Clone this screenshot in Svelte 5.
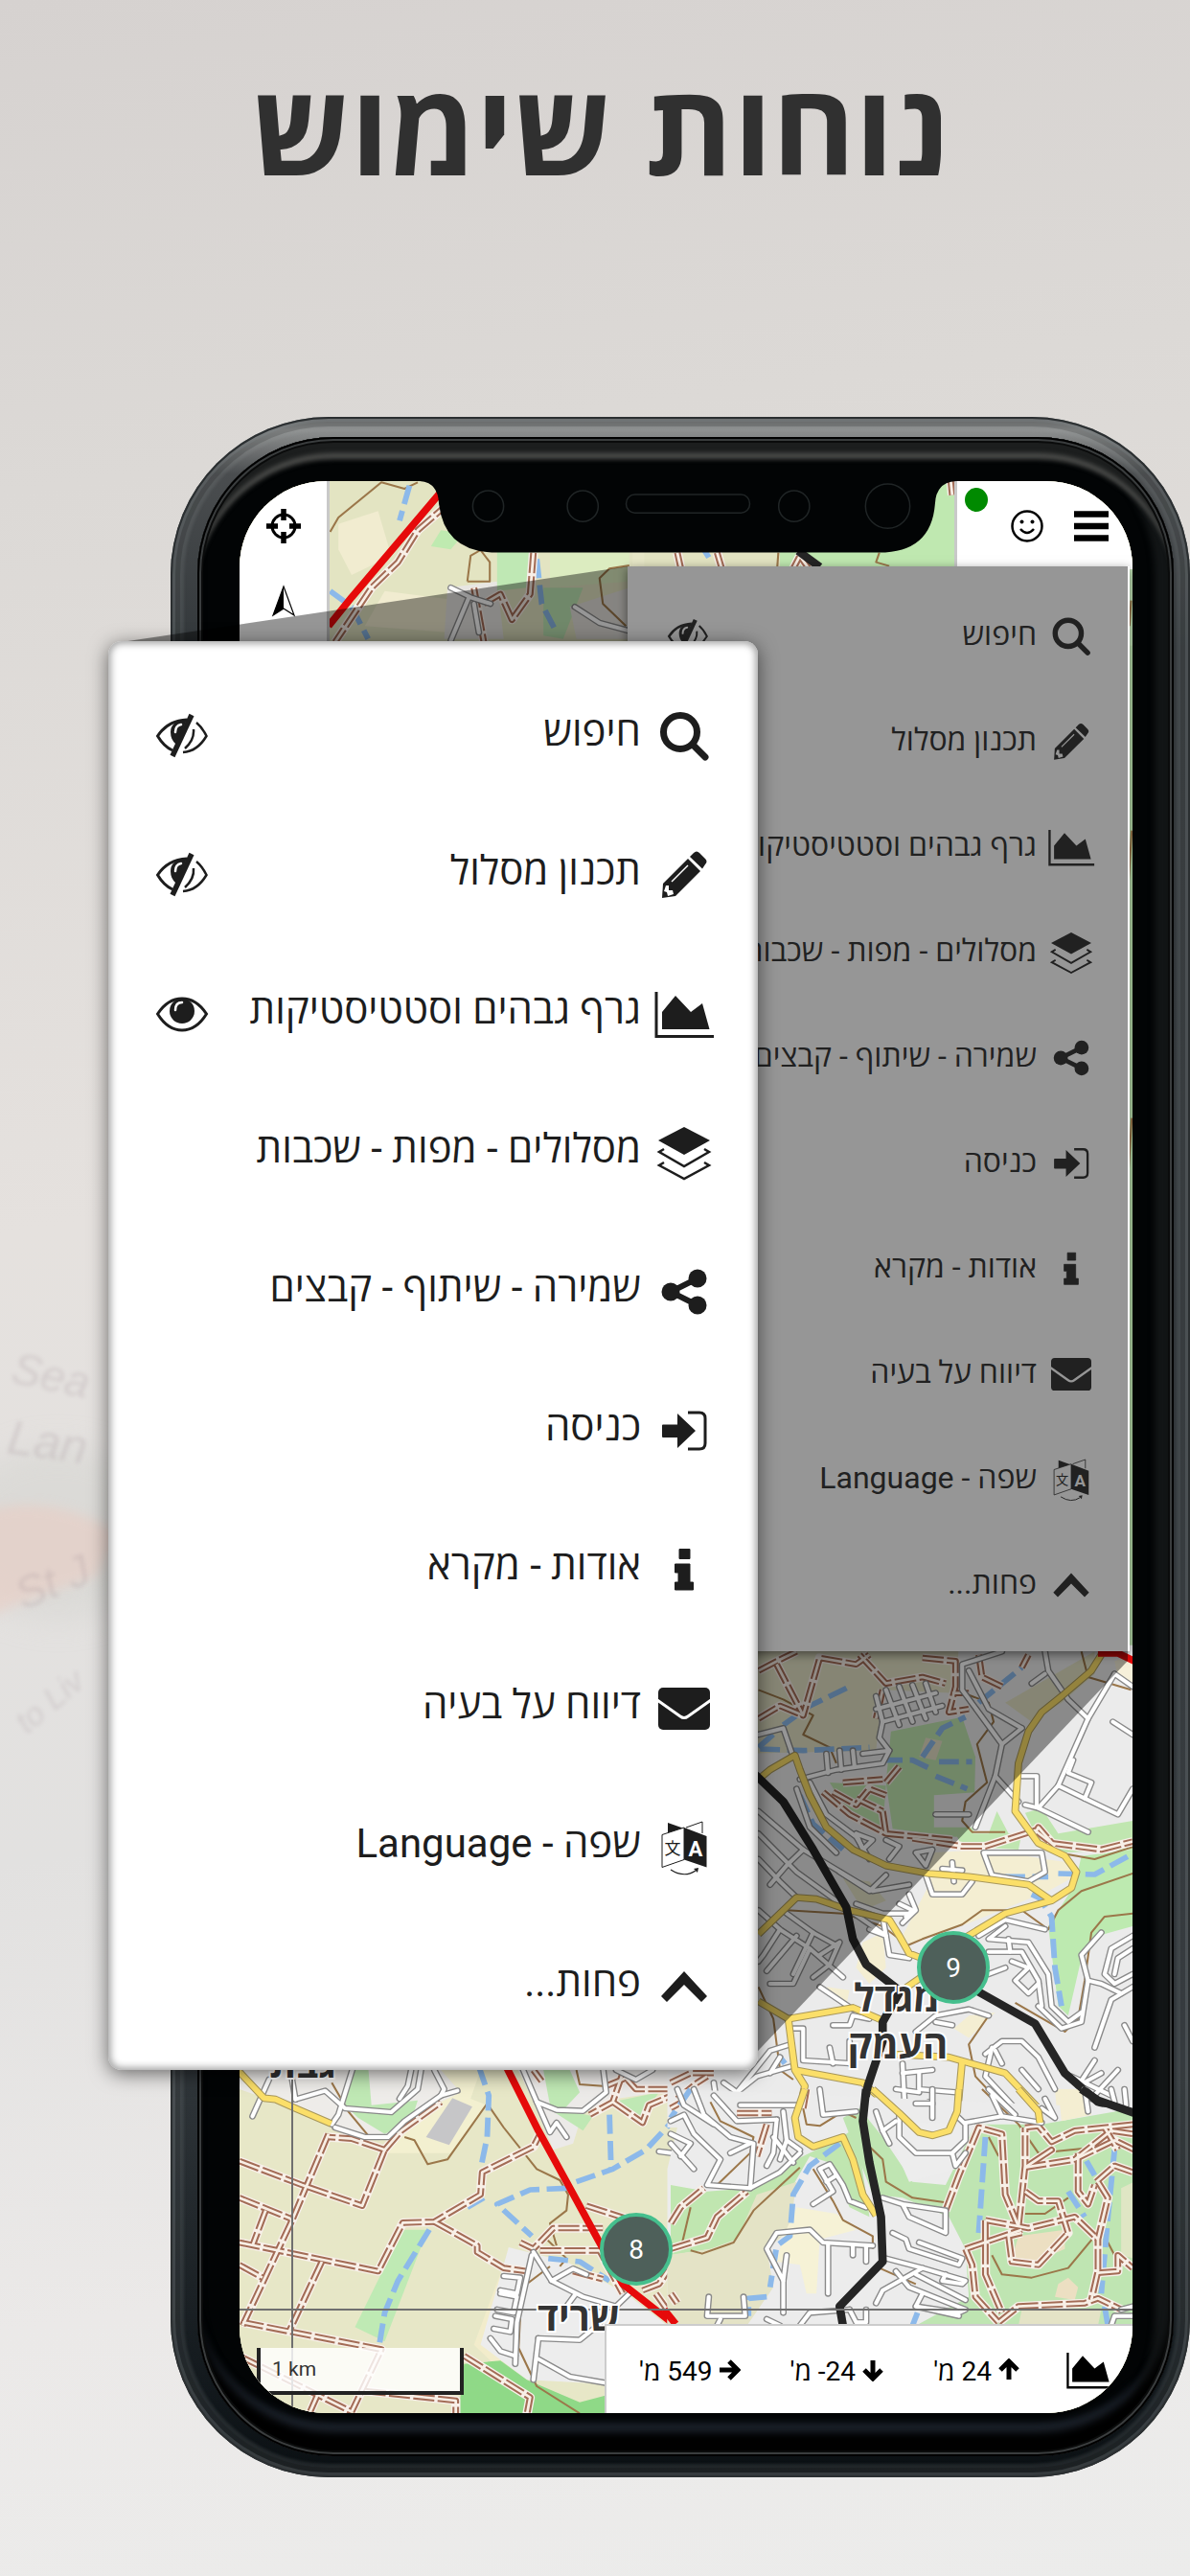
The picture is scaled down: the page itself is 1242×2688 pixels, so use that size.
<script>
  const items = [
    { icon: 'search', label: 'חיפוש', eye: 'hidden' },
    { icon: 'pencil', label: 'תכנון מסלול', eye: 'hidden' },
    { icon: 'chart', label: 'גרף גבהים וסטטיסטיקות', eye: 'shown' },
    { icon: 'layers', label: 'מסלולים - מפות - שכבות' },
    { icon: 'share', label: 'שמירה - שיתוף - קבצים' },
    { icon: 'login', label: 'כניסה' },
    { icon: 'info', label: 'אודות - מקרא' },
    { icon: 'mail', label: 'דיווח על בעיה' },
    { icon: 'lang', label: 'שפה - Language' },
    { icon: 'up', label: 'פחות...' }
  ];

  const stats = [
    { dir: 'up', text: "24 מ'" },
    { dir: 'down', text: "24- מ'" },
    { dir: 'right', text: "549 מ'" }
  ];
  const arrows = {
    up: 'M12 22V4M3 12L12 3L21 12',
    down: 'M12 2V20M3 12L12 21L21 12',
    right: 'M2 12H20M12 3L21 12L12 21'
  };

  // Map tiles: each one has its own local grid, placed on the sheet by `at`.
  const tiles = [
    {
      at: 'translate(160 400) scale(.345 .3333)',
      areas: [
        ['#e3e4c2', '520,300 1450,300 1450,830 520,830'],
        ['#f1ecd0', '560,440 680,400 720,540 600,600 560,520'],
        ['#f1ecd0', '700,650 1000,690 900,780 640,760'],
        ['#e8e6e2', '890,640 1040,620 1060,800 880,800'],
        ['#bfeab0', '840,510 870,460 940,470 900,520'],
        ['#dcecc0', '1200,527 1440,527 1440,620 1200,640'],
        ['#bfe8b4', '1040,527 1150,527 1130,640 1040,650'],
        ['#bfe8b4', '1180,640 1300,640 1240,800 1180,790'],
        ['#e4e1dc', '1260,700 1440,640 1440,800 1280,800']
      ],
      contour: ['535,465 560,420 690,310 760,330 800,310', '950,620 960,540 990,522 1018,560 1018,620 950,620', '1440,570 1380,580 1350,610 1360,690 1430,760'],
      river: ['775,320 745,430', '1160,550 1175,690 1220,780', '535,650 600,700 650,800'],
      track: ['900,370 800,460 740,560 660,640 550,810', '1150,530 1140,660 1085,740 1050,660 1000,690', '970,640 1000,810'],
      street: ['900,640 960,670 1020,690', '955,670 900,805', '970,690 985,780', '1275,700 1350,750 1440,775'],
      yellow: [],
      black: [],
      red: ['530,760 600,670 870,340']
    },
    {
      at: 'translate(700 400) scale(.3457 .3333)',
      areas: [
        ['#e3e4c2', '-80,500 400,500 400,600 -80,600'],
        ['#bfe8b0', '330,500 700,500 780,300 860,300 860,600 330,600'],
        ['#bfe0b4', '1370,570 1400,570 1400,820 1370,820'],
        ['#b4d8a8', '1370,820 1400,820 1400,4000 1370,4000']
      ],
      contour: ['320,600 325,530', '630,530 620,560 660,572', '1390,680 1385,760', '1392,1400 1380,1600', '1392,2300 1380,2500'],
      river: ['100,520 115,545'],
      track: ['20,530 35,600', '140,530 160,600', '360,600 390,540 430,600', '845,300 850,350'],
      street: [],
      yellow: [],
      black: ['385,525 450,575'],
      red: []
    },
    {
      at: 'translate(160 2130) scale(.345 .3333)',
      areas: [
        ['#e7e7c7', '240,40 1600,40 1600,1200 240,1200'],
        ['#eeece9', '240,40 900,40 930,160 740,290 640,305 540,262 400,200 260,150'],
        ['#f3f0d0', '870,90 990,90 960,180 1010,200 900,350 700,350 830,210 930,160'],
        ['#bfe8b4', '600,80 650,80 660,200 800,185 780,250 700,290 620,240 580,200'],
        ['#c6c6c8', '825,300 905,178 965,205 895,325'],
        ['#eceae8', '1090,60 1600,60 1600,150 1400,180 1300,220 1270,320 1210,340 1150,190'],
        ['#bfe8b4', '1180,90 1260,90 1290,160 1240,215 1200,200'],
        ['#bfe8b4', '1390,190 1530,160 1470,250'],
        ['#bfe8b4', '1180,200 1330,235 1300,280'],
        ['#bfeab4', '755,590 830,590 700,940 610,895'],
        ['#f2eccb', '1060,700 1100,700 1050,1030 970,950'],
        ['#ededed', '1075,645 1250,690 1430,790 1568,900 1500,1080 1130,1060 990,950'],
        ['#8fd987', '940,1010 1050,1000 1130,1060 1290,1130 1400,1100 1400,1200 920,1200']
      ],
      contour: [
        '540,130 590,220 650,295',
        '760,300 790,310 830,385 890,370 1010,195 1060,270 1160,400 1230,435 1255,480 1250,530 1200,570 1220,640',
        '1280,90 1290,135 1360,140',
        '1200,705 1130,760 1110,860 1105,960 1160,1080 1290,1165',
        '1180,610 1250,680 1230,705'
      ],
      river: [
        '985,80 1015,170 1010,300 990,400',
        '1250,460 1140,465 1040,510 1145,610',
        '1280,440 1390,400 1490,340 1580,240',
        '1380,230 1385,400',
        '835,590 740,750 700,850 683,955',
        '1195,680 1290,690 1380,750',
        '1000,490 950,520'
      ],
      track: [
        '530,290 420,560 270,890',
        '260,375 450,450 632,515 700,340 600,305 530,300',
        '700,340 750,280 870,190',
        '260,490 415,555',
        '340,530 300,640',
        '260,630 680,720 755,568 850,565 990,480 995,410 1150,330 1170,290',
        '850,565 980,640 980,660 1060,710 1130,720',
        '260,700 330,740',
        '510,690 410,910',
        '270,880 690,965 600,1160',
        '260,985 600,1160',
        '500,1100 470,1170',
        '640,1095 915,1125 915,1170',
        '940,985 1140,1115 1130,1170',
        '1310,515 1430,555',
        '1110,630 1150,650 1210,585 1360,585',
        '1170,655 1350,655 1420,790',
        '1270,720 1360,745',
        '1150,90 1175,125',
        '1420,100 1390,190 1320,230',
        '1390,190 1480,255 1500,200 1568,170',
        '1370,140 1430,115 1460,150 1568,150',
        '1480,780 1530,760 1568,700',
        '1520,790 1568,860'
      ],
      street: [
        '605,80 560,230 540,260',
        '350,120 300,235',
        '430,182 520,155 580,210 720,222 800,150 810,90',
        '550,270 640,300 710,300 760,250 870,170 920,155',
        '420,120 430,182',
        '780,90 770,140 745,180',
        '850,90 880,150 870,170',
        '1115,80 1160,190 1220,215 1300,218 1370,160 1360,80',
        '1160,190 1200,285 1220,255 1250,300',
        '1400,90 1460,120 1510,90',
        '1568,350 1530,345',
        '1145,670 1100,880 1095,1010',
        '1060,735 1110,740 1100,790 1050,780',
        '1050,790 1100,800 1090,850 1040,840',
        '1035,860 1085,870 1080,910 1030,900',
        '1020,930 1050,970 1095,985',
        '1150,660 1205,750 1270,712 1310,730',
        '1205,750 1300,800 1400,830 1440,790',
        '1250,830 1275,795',
        '1165,930 1290,935 1350,885',
        '1165,930 1150,1060',
        '1165,995 1260,1050 1370,1070'
      ],
      yellow: ['255,90 335,178 370,182 430,210 538,258'],
      black: [],
      red: ['1068,80 1165,280 1250,440 1350,630 1420,760 1580,890']
    },
    {
      at: 'translate(700 1700) scale(.3457 .3333)',
      areas: [
        ['#ebebeb', '200,50 1400,50 1400,1560 -10,1560 -10,1350 200,1350'],
        ['#e4e3c6', '200,50 870,50 860,200 640,190 620,380 200,390'],
        ['#e4e3c6', '1010,230 1280,70 1280,140 1180,230 1090,290'],
        ['#c0e6b0', '665,320 880,275 920,400 915,640 860,650 670,625 650,480'],
        ['#e6e1c8', '770,340 820,350 800,410 750,400'],
        ['#ebebeb', '795,520 930,510 925,620 795,620'],
        ['#c0e6b0', '860,640 960,640 985,570 1020,640 1060,640 1050,690 880,680'],
        ['#c0e6b0', '1070,575 1120,560 1170,640 1395,600 1395,690 1180,700 1110,660'],
        ['#f4eed2', '780,700 960,690 1130,720 1200,730 1210,780 1140,820 900,920 720,985 700,960 780,800'],
        ['#bdeab0', '1220,800 1240,710 1395,690 1395,930 1290,960 1240,1030 1200,1210 1170,1180 1140,930'],
        ['#f4eed2', '560,1060 580,980 640,950 650,1060 600,1110'],
        ['#f4eed2', '855,1250 900,1210 980,1200 900,1280'],
        ['#f4eed2', '470,1120 540,1130 530,1180'],
        ['#c0e6b0', '480,480 650,490 640,620 540,580'],
        ['#e4e3c6', '520,780 600,790 650,850 580,880'],
        ['#f4eed2', '1160,1440 1240,1440 1250,1500 1170,1560'],
        ['#f6f0da', '1340,100 1400,80 1400,170 1350,150']
      ],
      contour: [
        '265,190 340,220 430,270 400,330 480,370 500,420',
        '860,190 960,230 975,290 925,360 955,480 890,540 880,600 910,635 1010,635',
        '1240,70 1260,150 1390,190',
        '1170,700 1280,720 1400,680',
        '1395,765 1240,820 1170,880 1140,940 1060,880 940,880 880,925 760,970 715,990',
        '350,880 520,890 640,930 690,970',
        '265,1120 310,1220 330,1380 370,1410',
        '960,1210 900,1300 920,1400 1010,1500',
        '1395,890 1310,900 1270,950 1250,1100 1230,1220 1190,1260 1040,1170'
      ],
      river: [
        '270,375 400,380 600,370', '340,300 420,240 550,175', '265,370 320,320', '640,410 730,410 790,440', '760,400 820,310 890,275',
        '810,415 910,415', '800,460 895,500', '390,520 430,610 520,690', '1100,820 1150,900 1160,1060 1180,1180', '1170,765 1280,768 1400,700',
        '930,230 1060,120', '1090,830 1130,850', '1010,775 1140,775', '330,1340 345,1360'
      ],
      track: [
        '265,130 340,90 380,70', '320,110 400,270 450,90 560,110 600,80', '265,280 330,240 400,270', '570,80 650,170 760,150 830,170',
        '760,90 860,100 860,180 840,260 900,250', '900,200 850,200', '640,190 620,280', '690,430 650,480', '460,510 540,580 650,640 850,660',
        '490,510 560,550 600,500 650,520', '560,530 640,570', '520,480 640,470', '640,570 650,640',
        '730,655 880,680 950,680 1100,630 1150,670 1300,690 1395,665', '1100,640 1110,620 1160,680', '930,80 940,150 1000,180', '1080,80 1060,120',
        '0,1420 60,1390 130,1390', '20,1470 80,1420 110,1400', '0,1500 70,1460'
      ],
      street: [
        '620,210 640,290 630,340 660,380 580,390', '650,190 690,300', '690,180 730,290', '730,175 770,280', '770,170 800,260', '620,250 800,200', '640,290 820,240',
        '265,330 340,310 370,400', '390,470 500,440 640,420 660,380', '470,390 475,450', '510,380 515,440', '550,380 555,430',
        '1000,70 880,110 880,190 1000,360 1060,310', '900,130 960,250 1060,310', '1130,70 1140,130 1200,220 1260,280',
        '1090,170 1130,140', '1340,140 1260,280 1170,490 1110,560 1070,550', '1110,560 1260,635', '1060,460 1105,460 1105,550', '1215,410 1200,450 1270,480 1250,530 1170,490',
        '1250,530 1350,580 1395,500', '1335,290 1395,330', '1340,140 1395,180', '1000,360 980,460 1050,540', '980,460 920,620', '800,580 900,580',
        '265,570 400,690 560,790 610,820 720,800', '265,640 380,760 540,880', '420,480 470,580 560,650 600,720', '380,500 420,620 500,700',
        '560,640 610,660 580,690 560,640', '650,660 690,680 660,720', '740,700 790,690 770,740 740,700', '510,760 600,820 650,770',
        '265,720 330,790 380,840', '300,800 350,740 400,690', '265,880 330,940 420,1000 520,1090', '350,890 430,950 500,990', '330,940 280,1020 265,1040', '420,1000 370,1110 300,1110',
        '380,960 290,1070', '430,950 370,1080', '540,880 650,960 640,900', '560,860 640,890 720,890', '450,1020 510,980 480,1050 430,1090',
        '945,700 1120,700 1130,760 1080,790 970,770 945,700', '770,770 790,830 880,830 910,790', '850,730 855,790', '820,750 880,755', '720,830 740,880 700,920', '690,860 730,880 710,900',
        '600,940 650,960 660,1020 720,1030', '930,960 1010,910 1130,940', '1010,930 960,970 1080,980 1140,1080 1150,1180 1200,1230 1240,1200', '960,1010 1060,1010 1110,1100 1120,1180',
        '1020,970 1025,1010', '1030,1040 1080,1060 1040,1100 1080,1140 1110,1110', '960,1080 1010,1060', '1395,960 1330,1000 1310,1080 1340,1110 1395,1080',
        '1395,1000 1350,1030 1340,1080', '1300,950 1240,1020 1260,1100 1240,1230 1180,1250 1110,1180', '1395,1120 1330,1160 1280,1310', '1370,1240 1395,1290', '1260,1100 1300,1110 1360,1140',
        '740,1260 800,1210 900,1190 960,1210', '800,1230 850,1240', '950,1330 1000,1290 1060,1290 1110,1340 1160,1440', '1000,1360 980,1320', '970,1310 950,1400 1040,1500',
        '1280,1350 1230,1430 1300,1390', '1210,1400 1330,1460', '1350,1380 1270,1470', '1110,1440 1060,1380',
        '450,1120 550,1190', '490,1240 540,1240 550,1210 600,1220', '370,1250 400,1250 400,1350 550,1360', '480,1310 490,1360', '540,1290 540,1360',
        '700,1360 710,1560', '700,1390 790,1380', '750,1390 750,1440 860,1450', '680,1440 750,1450', '780,1480 780,1560',
        '360,1300 300,1320 200,1450 160,1420', '330,1340 300,1390', '360,1370 260,1400 200,1450', '210,1495 310,1495', '130,1420 150,1560'
      ],
      yellow: [
        '265,470 300,440 375,395 390,440 420,520 470,620 550,690 650,740 780,765 900,775 1080,800 1150,850',
        '1300,80 1270,130 1180,210 1120,260 1080,320 1050,420 1040,570 1110,670 1190,710 1225,760 1210,810 1150,850 1010,890 890,965',
        '265,955 380,840 440,845 540,880 660,910 690,960 720,1015 770,1035',
        '265,1165 355,1220 550,1185 640,1225',
        '355,1220 375,1380 405,1430 390,1500',
        '375,1380 580,1420 690,1520',
        '660,1330 840,1340 1010,1390 1110,1500',
        '880,1350 865,1520',
        '700,1130 770,1080'
      ],
      black: [
        '255,455 340,540 430,690 530,870 550,970 590,1050 690,1130',
        '700,1120 640,1230 640,1290 595,1430 580,1510',
        '920,1130 1100,1235 1190,1390 1290,1480 1400,1515'
      ],
      red: ['1290,75 1350,75 1400,100']
    },
    {
      at: 'translate(700 2180) scale(.3457 .3333)',
      areas: [
        ['#ececec', '30,0 1400,60 1400,760 -10,760 -10,250 20,120'],
        ['#c0e6b0', '0,300 110,320 250,310 380,220 500,160 560,120 600,400 540,370 480,230 420,210 370,300 270,340 200,470 120,500 0,520'],
        ['#e4e3c6', '-10,520 120,500 200,470 260,330 380,290 360,440 290,500 310,620 230,740 -10,740'],
        ['#f6f2d6', '380,370 500,390 560,440 450,470 440,640 410,640 390,550 320,540 340,460'],
        ['#bfe5b2', '520,90 570,60 640,150 730,290 830,300 920,110 1120,110 1400,60 1400,740 740,740 900,650 890,500 840,400 700,340 610,330'],
        ['#ededed', '640,100 900,110 860,250 720,290'],
        ['#ecdfc2', '1050,460 1190,440 1190,500 1100,540 1030,530'],
        ['#ecdfc2', '1170,610 1200,590 1230,620 1220,660 1160,650'],
        ['#e4e3c6', '1060,690 1300,690 1290,740 1050,740'],
        ['#dfe6c4', '1360,310 1400,290 1400,530 1360,520'],
        ['#f4eed2', '1170,0 1260,20 1270,80 1180,100']
      ],
      contour: [
        '120,40 150,100 250,150 240,200 140,300', '400,60 410,110 450,115 520,70 560,90', '600,180 640,220 650,290 730,340 830,355',
        '390,245 250,380 190,480 95,515 60,505', '430,250 490,350 520,410 610,460 610,500', '60,370 35,480', '940,0 1050,110 1110,200 1300,180',
        '960,150 990,210', '970,520 1000,580 1090,590 1200,560 1280,460', '1070,390 1130,390 1200,340', '1310,460 1340,520', '630,560 740,610'
      ],
      river: ['510,170 420,240 370,330 360,460 320,490 300,620', '290,650 235,655 235,710', '950,150 930,450', '1340,190 1320,400 1300,640', '1255,225 1280,270', '1200,320 1250,400', '745,700 730,740', '1310,680 1320,740', '60,0 0,90'],
      track: [
        '200,75 305,75', '290,110 260,210', '410,0 400,60', '0,420 30,370 100,310', '0,500 110,465 140,400 230,320', '0,640 20,670',
        '830,380 870,270 930,120 1000,140 1010,330 1050,430', '1050,430 1070,240 1070,120', '1070,245 1220,220 1340,160 1400,190', '1070,245 1150,190 1070,245',
        '1070,120 1110,115 1150,165 1220,130 1400,110', '1310,120 1350,190', '1230,200 1230,320 1260,360 1280,300', '1285,290 1340,240 1395,260', '1290,290 1320,340 1290,470 1290,570 1270,660',
        '1070,320 1110,350 1170,350 1200,450 1110,550 1030,540 1020,460 1060,450', '950,410 1080,435 1220,400 1290,470', '950,410 950,580 1000,700', '890,500 1060,440', '890,500 910,550 920,650 990,730',
        '990,730 1050,680 1250,670 1290,655 1360,690', '1290,575 1350,570 1350,520 1395,560', '1220,220 1330,130 1395,140'
      ],
      street: [
        '70,0 100,80 180,150 250,170 240,310', '20,0 40,50 130,110', '130,20 200,100 320,95', '210,50 320,50 380,50', '0,100 40,80 70,140 150,220 110,300 240,310 330,260 390,200',
        '0,170 70,250', '30,210 60,170 0,140', '180,200 240,170', '320,95 310,200 290,240', '340,70 350,160 390,190', '310,150 370,230', '350,160 330,220',
        '430,360 490,320 450,250 480,235 520,300 540,350 590,370', '470,290 500,270', '450,0 460,80 560,70', '620,70 640,130 680,100', '640,130 660,170',
        '690,80 690,150 740,200 850,200 890,160 890,110 860,80', '850,200 860,240 890,200', '740,45 790,45', '790,0 790,90', '890,105 1000,85 1120,105', '1000,85 970,20', '1040,80 960,0', '1120,60 1160,90 1130,30',
        '640,340 700,360 720,400 830,450 830,380 700,360', '350,520 340,600 290,500 320,450 420,440 460,480 610,490', '475,485 475,640', '550,490 550,520', '590,490 590,540',
        '340,600 340,700', '115,650 110,710 225,710 220,650', '150,720 140,740', '290,720 330,740', '390,740 420,700 540,690', '540,690 560,730 590,730 590,690',
        '670,450 710,470 720,500 870,550 880,530 750,480', '650,530 760,560 890,600 880,610 820,600 830,580', '680,570 720,620 890,690 870,700 740,680', '620,670 640,630 760,560', '740,580 890,660', '760,640 740,680 870,710',
        '1330,740 1340,710 1395,710', '1360,690 1395,680', '1250,0 1260,70', '1330,0 1340,40', '1370,0 1375,50'
      ],
      yellow: ['405,0 375,90 385,150 430,180 520,150 550,220 580,330 620,395', '610,0 690,75 750,135 790,145 840,130 865,70 870,0', '1050,0 1110,70 1115,105'],
      black: ['590,0 580,100 600,230 635,400 640,540 510,680 520,740', '1240,0 1290,35 1400,75'],
      red: ['-20,690 15,735']
    }
  ];
</script>

{#snippet icon(name)}
  <svg class="icon" viewBox="0 0 54 54" aria-hidden="true">
    {#if name === 'search'}
      <circle cx="23" cy="23" r="17.5" fill="none" stroke="currentColor" stroke-width="7" />
      <path d="M36 36L49 49" stroke="currentColor" stroke-width="7" stroke-linecap="round" />
    {:else if name === 'pencil'}
      <path d="M33 8l4-4q3-3 6 0l6 6q3 3 0 6l-3 4.500z" fill="currentColor" />
      <path d="M31 10L44 23L18 49L4 51L5 36Z" fill="currentColor" />
      <path d="M14 34L31 17" stroke="#fff" stroke-width="1.500" />
      <path d="M8 38l3 0v5h4l1 4-6 2-1-4-3-1z" fill="#fff" />
    {:else if name === 'chart'}
      <path d="M-2 4V50.500H58" fill="none" stroke="currentColor" stroke-width="3" />
      <path d="M4 43V25L18 8L34 25L46 16L53.500 43Z" fill="currentColor" />
    {:else if name === 'layers'}
      <path d="M0 14L27 0L54 14L27 29Z" fill="currentColor" />
      <path d="M6 23L1 26L27 41L53 26L48 23M6 37L1 40L27 54L53 40L48 37" fill="none" stroke="currentColor" stroke-width="2.500" />
    {:else if name === 'share'}
      <path d="M41 13L13 27L41 41" fill="none" stroke="currentColor" stroke-width="6" />
      <circle cx="13" cy="27" r="9.500" fill="currentColor" />
      <circle cx="41" cy="13" r="9.500" fill="currentColor" />
      <circle cx="41" cy="41" r="9.500" fill="currentColor" />
    {:else if name === 'login'}
      <path d="M5 20.500H20V9L39 27L20 45V34H5Q4 34 4 33V21.500Q4 20.500 5 20.500Z" fill="currentColor" />
      <path d="M31 8H43Q49 8 49 14V40Q49 46 43 46H31" fill="none" stroke="currentColor" stroke-width="3" />
    {:else if name === 'info'}
      <path d="M22 5.500H33V15.500H22ZM17.500 21H33V40H36.500V48H17.500V40H21V30H17.500Z" fill="currentColor" stroke="currentColor" stroke-width="1" stroke-linejoin="round" />
    {:else if name === 'mail'}
      <rect x="0" y="5" width="54" height="44" rx="5" fill="currentColor" />
      <path d="M-1 18L23 35Q27 38 31 35L55 18" fill="none" stroke="#fff" stroke-width="3" />
    {:else if name === 'lang'}
      <path d="M10 1L27 7L10 12Z" fill="currentColor" />
      <path d="M29 6L46 0V12" fill="none" stroke="currentColor" stroke-width="1" />
      <path d="M4 13.500L27 6V39.500L4 47.500Z" fill="#fff" stroke="currentColor" stroke-width="1" />
      <path d="M27 6L50.500 15V47.500L27 39.500Z" fill="currentColor" />
      <text x="39" y="36" text-anchor="middle" font-size="22" font-weight="700" fill="#fff">A</text>
      <text x="15" y="34" text-anchor="middle" font-size="17" fill="currentColor">文</text>
      <path d="M13 50Q27 59 39 51" fill="none" stroke="currentColor" stroke-width="1.200" />
      <path d="M37 49L42 48L41 53Z" fill="currentColor" />
    {:else if name === 'up'}
      <path d="M27 11L51 37L45 43L27 25L9 43L3 37Z" fill="currentColor" />
    {:else if name === 'shown'}
      <path d="M1.500 27Q12 11 27 11Q42 11 52.500 27Q42 44 27 44Q12 44 1.500 27Z" fill="none" stroke="currentColor" stroke-width="3" />
      <circle cx="27" cy="24" r="13" fill="currentColor" />
      <path d="M20 23Q20 15 27 15" fill="none" stroke="#fff" stroke-width="2.500" stroke-linecap="round" />
    {:else if name === 'hidden'}
      <path d="M17 42Q8 38 1.500 27Q12 11 32 10" fill="none" stroke="currentColor" stroke-width="3" />
      <path d="M32 10Q15 11 15 23Q15 31 21 36Z" fill="currentColor" />
      <path d="M20 23Q20 16 26 15" fill="none" stroke="#fff" stroke-width="2.500" stroke-linecap="round" />
      <path d="M37 5L17 48" stroke="currentColor" stroke-width="5.500" />
      <path d="M42 13Q48 18 52.500 27Q43 43 28 44M39 20Q40 31 30 40" fill="none" stroke="currentColor" stroke-width="2.500" />
    {/if}
  </svg>
{/snippet}

{#snippet menu()}
  {#each items as item}
    <li>
      <button class="entry">{@render icon(item.icon)}<span>{item.label}</span></button>
      {#if item.eye}
        <button class="eye" aria-label="הצגה או הסתרה">{@render icon(item.eye)}</button>
      {/if}
    </li>
  {/each}
{/snippet}

<main class="page" dir="rtl">
  <svg class="backdrop" viewBox="0 0 1242 2688" preserveAspectRatio="none" aria-hidden="true">
    <defs>
      <filter id="soft"><feGaussianBlur stdDeviation="2" /></filter>
      <filter id="haze" x="-50%" y="-50%" width="200%" height="200%"><feGaussianBlur stdDeviation="16" /></filter>
      <filter id="edge" x="-20%" y="-20%" width="140%" height="140%"><feGaussianBlur stdDeviation="6" /></filter>
    </defs>
    <ellipse cx="60" cy="1600" rx="110" ry="90" fill="#d6d6d2" opacity=".6" filter="url(#haze)" />
    <path d="M-20 1578Q50 1555 125 1600L100 1645Q40 1665 -20 1690Z" fill="#eccbc0" opacity=".5" filter="url(#edge)" />
    <g class="print" filter="url(#soft)" direction="ltr">
      <text x="10" y="1442" transform="rotate(12 10 1442)" font-size="46">Sea</text>
      <text x="6" y="1516" transform="rotate(8 6 1516)" font-size="50">Lan</text>
      <text x="24" y="1680" transform="rotate(-22 24 1680)" font-size="46">St J</text>
      <text x="28" y="1810" transform="rotate(-40 28 1810)" font-size="34">to Liv</text>
    </g>
  </svg>

  <header><h1>נוחות שימוש</h1></header>

  <section class="stage">
    <div class="phone">
      <div class="bezel">
        <div class="screen">
          <svg class="map" viewBox="250 502 932 2016" preserveAspectRatio="xMidYMid slice" aria-hidden="true">
            <rect x="250" y="502" width="932" height="2016" fill="#e7e7c7" />
            {#each tiles as t}
              <g transform={t.at}>
                {#each t.areas as [fill, pts]}<polygon points={pts} {fill} />{/each}
                {#each t.contour as pts}<polyline class="contour" points={pts} />{/each}
                {#each t.river as pts}<polyline class="river" points={pts} />{/each}
                {#each t.track as pts}<polyline class="track-a" points={pts} />{/each}
                {#each t.track as pts}<polyline class="track-b" points={pts} />{/each}
                {#each t.track as pts}<polyline class="track-c" points={pts} />{/each}
                {#each t.street as pts}<polyline class="street-a" points={pts} />{/each}
                {#each t.street as pts}<polyline class="street-b" points={pts} />{/each}
                {#each t.yellow as pts}<polyline class="yellow-a" points={pts} />{/each}
                {#each t.yellow as pts}<polyline class="yellow-b" points={pts} />{/each}
                {#each t.black as pts}<polyline class="black" points={pts} />{/each}
                {#each t.red as pts}<polyline class="red" points={pts} />{/each}
              </g>
            {/each}
            <path class="grid" d="M305 2100V2518M250 2410H1182" />
            <g class="place">
              <text x="316" y="2168">גבת</text>
              <text x="604" y="2432">שריד</text>
              <text x="936" y="2099">מגדל</text>
              <text x="937" y="2148">העמק</text>
            </g>
            <g class="marker">
              <circle cx="664" cy="2347" r="36" />
              <text x="664" y="2357">8</text>
              <circle cx="995" cy="2053" r="36" />
              <text x="995" y="2063">9</text>
            </g>
          </svg>

          <div class="topbar">
            <div class="tools account">
              <button aria-label="תפריט">
                <svg viewBox="0 0 36 36"><path d="M0 5.500H36M0 18H36M0 30.500H36" stroke="#000" stroke-width="6.500" /></svg>
              </button>
              <button aria-label="משתמש">
                <svg viewBox="0 0 36 36"><circle cx="18" cy="18" r="15.500" fill="none" stroke="#000" stroke-width="2.500" /><circle cx="12.500" cy="13.500" r="2" /><circle cx="23.500" cy="13.500" r="2" /><path d="M11 21Q18 29 25 21" fill="none" stroke="#000" stroke-width="2.500" /></svg>
              </button>
              <span class="dot"></span>
            </div>
            <div class="tools locate">
              <button aria-label="מיקום">
                <svg viewBox="0 0 36 36"><circle cx="18" cy="18" r="12" fill="none" stroke="#000" stroke-width="3" /><path d="M18 0V12M18 24V36M0 18H12M24 18H36" stroke="#000" stroke-width="5.500" /></svg>
              </button>
              <button aria-label="צפון">
                <svg viewBox="0 0 36 36"><path d="M18 3L29 33L18 26L7 33Z" fill="#fff" stroke="#000" stroke-width="1.200" /><path d="M18 3V26L7 33Z" /></svg>
              </button>
            </div>
            <div class="notch">
              <svg viewBox="0 0 556 74" aria-hidden="true">
                <path d="M0 0H556Q535 1 534 24Q530 74 476 74H80Q26 74 20 24Q19 1 0 0Z" fill="#020405" />
                <g fill="none" stroke="#202526" stroke-width="1.500">
                  <circle cx="71" cy="26" r="16" />
                  <circle cx="169" cy="26" r="16" />
                  <circle cx="388" cy="26" r="16" />
                  <circle cx="485" cy="26" r="23" />
                  <rect x="214" y="14" width="128" height="19" rx="9" />
                </g>
              </svg>
            </div>
          </div>

          <ul class="menu small">{@render menu()}</ul>

          <div class="bottombar">
            <div class="stats">
              <button aria-label="גרף">{@render icon('chart')}</button>
              {#each stats as s}
                <span class="stat">
                  <svg viewBox="0 0 24 24" aria-hidden="true"><path d={arrows[s.dir]} fill="none" stroke="#000" stroke-width="5" /></svg>
                  <span>{s.text}</span>
                </span>
              {/each}
            </div>
            <div class="scale" dir="ltr">1 km</div>
          </div>
        </div>
      </div>
    </div>

    <svg class="beam" viewBox="0 435 1242 2253" preserveAspectRatio="none" aria-hidden="true">
      <path d="M120 671L655 591H1177V1733L775 2157Z" />
    </svg>

    <ul class="menu large">{@render menu()}</ul>
  </section>
</main>

<style>
  :global(body) {
    margin: 0;
  }
  .page {
    position: relative;
    min-height: 2688px;
    overflow: hidden;
    background: linear-gradient(172deg, #d6d2d0 0%, #dcd9d6 18%, #e5e1de 45%, #e2e1e0 68%, #ebe9e8 85%, #ececeb 100%);
    font-family: Roboto, 'Open Sans', 'Noto Sans CJK JP', sans-serif;
    color: #1d1d1d;
  }
  .backdrop {
    position: absolute;
    inset: 0;
    width: 100%;
    height: 100%;
  }
  .print {
    fill: #9a8890;
    opacity: 0.22;
    font-family: 'Liberation Sans', sans-serif;
    font-style: italic;
  }
  header {
    position: relative;
    height: 435px;
    display: flex;
    justify-content: center;
  }
  h1 {
    margin: 0;
    padding: 48px 0 0 10px;
    font: 700 132px/168px 'Open Sans', sans-serif;
    color: #303030;
  }
  .stage {
    position: relative;
  }
  .phone {
    margin-left: 178px;
    box-sizing: border-box;
    height: 2150px;
    padding: 21px 17px 22px 28px;
    border-radius: 165px;
    background: linear-gradient(to bottom, #6c6e6f 0, #8e9090 14px, #4a4d4f 60px, #33383b 240px, #30363a 80%, #10161a 97%, #0a0f12 100%);
    box-shadow:
      inset 0 0 0 2px #2b2f31,
      inset 0 0 0 5px rgba(130, 138, 142, 0.25),
      inset 0 0 0 10px rgba(0, 0, 0, 0.15),
      inset 0 0 3px 14px rgba(160, 165, 165, 0.15);
  }
  .bezel {
    height: 100%;
    box-sizing: border-box;
    padding: 46px 43px 45px 44px;
    border-radius: 142px;
    background: #020405;
    box-shadow:
      inset 0 0 0 2px #000,
      inset 0 0 0 4px #3a3d3e,
      inset 0 0 0 6px #0a0b0b,
      inset 0 20px 5px -3px #1c1e1e,
      inset 0 26px 5px -3px #50514f,
      inset 0 -26px 10px 0 #000,
      inset -24px 0 6px -4px #121516,
      inset 0 -40px 8px -6px #232b36;
  }
  .screen {
    position: relative;
    height: 100%;
    border-radius: 90px;
    overflow: hidden;
    display: flex;
    flex-direction: column;
    background: #e7e7c7;
  }
  .map {
    position: absolute;
    inset: 0;
    width: 100%;
    height: 100%;
  }
  .map polyline {
    fill: none;
    stroke-linejoin: round;
  }
  .contour { stroke: #9b774a; stroke-width: 6; }
  .river { stroke: #8cb9ea; stroke-width: 17; stroke-dasharray: 60 22; }
  .track-a { stroke: #f8f0ea; stroke-width: 28; }
  .track-b { stroke: #a36c56; stroke-width: 20; stroke-dasharray: 64 10; }
  .track-c { stroke: #f8efe6; stroke-width: 8; }
  .street-a { stroke: #8a8a8a; stroke-width: 20; stroke-linecap: round; }
  .street-b { stroke: #fff; stroke-width: 12; stroke-linecap: round; }
  .yellow-a { stroke: #a8975a; stroke-width: 23; }
  .yellow-b { stroke: #fbdf69; stroke-width: 17; }
  .black { stroke: #252525; stroke-width: 25; }
  .red { stroke: #e60a0a; stroke-width: 22; }
  .grid {
    stroke: #6f6f6f;
    stroke-width: 2;
  }
  .place text {
    font: 700 40px 'Open Sans', sans-serif;
    text-anchor: middle;
    fill: #333;
    stroke: #fff;
    stroke-width: 4;
    paint-order: stroke;
  }
  .marker circle {
    fill: #4e605a;
    stroke: #45bf8d;
    stroke-width: 4;
  }
  .marker text {
    font-size: 28px;
    text-anchor: middle;
    fill: #fff;
  }
  button {
    display: flex;
    align-items: center;
    padding: 0;
    border: 0;
    background: none;
    font: inherit;
    color: inherit;
  }
  .topbar {
    position: relative;
    display: flex;
    justify-content: space-between;
    align-items: flex-start;
    height: 89px;
  }
  .tools {
    display: flex;
    box-sizing: border-box;
    background: #fff;
  }
  .tools svg {
    width: 36px;
    height: 36px;
  }
  .account {
    position: relative;
    width: 186px;
    height: 92px;
    padding: 2px 25px 0;
    gap: 31px;
    align-items: center;
    border-left: 3px solid #c9c9c9;
  }
  .dot {
    position: absolute;
    left: 8px;
    top: 7px;
    width: 24px;
    height: 25px;
    border-radius: 50%;
    background: #008a00;
  }
  .locate {
    flex-direction: column;
    align-items: center;
    gap: 42px;
    width: 94px;
    height: 300px;
    padding-top: 29px;
    border-right: 3px solid #c9c9c9;
  }
  .notch {
    position: absolute;
    left: 188px;
    top: 0;
    width: 560px;
  }
  .notch svg {
    display: block;
    width: 100%;
  }
  .menu {
    list-style: none;
    margin: 0;
    box-sizing: border-box;
    background: #fff;
  }
  .menu li {
    display: flex;
    justify-content: space-between;
    align-items: center;
  }
  .icon {
    overflow: visible;
    flex: none;
  }
  .menu .entry {
    white-space: nowrap;
  }
  .small {
    position: relative;
    width: 524px;
    margin-right: 3px;
    padding: 16px 38px 14px 42px;
    border-top: 2px solid #fff;
    border-right: 2px solid #fff;
    font-size: 32px;
    color: #383838;
    box-shadow: 0 3px 10px rgba(0, 0, 0, 0.5);
  }
  .small li {
    height: 110px;
  }
  .small .icon {
    width: 42px;
    height: 42px;
  }
  .small .entry {
    gap: 15px;
  }
  .small .entry span {
    padding-bottom: 8px;
  }
  .large {
    position: absolute;
    left: 113px;
    top: 234px;
    width: 678px;
    padding: 26px 50px 15px;
    border-radius: 14px;
    font-size: 42px;
    box-shadow:
      0 4px 20px rgba(0, 0, 0, 0.55),
      inset 0 0 7px 3px #aaa;
  }
  .large li {
    height: 145px;
  }
  .large .icon {
    width: 54px;
    height: 54px;
  }
  .large .entry {
    gap: 18px;
  }
  .large .entry span {
    padding-bottom: 12px;
  }
  .bottombar {
    position: relative;
    margin-top: auto;
    display: flex;
    justify-content: space-between;
    align-items: flex-start;
  }
  .stats {
    display: flex;
    align-items: center;
    justify-content: space-between;
    box-sizing: border-box;
    width: 551px;
    height: 93px;
    padding: 0 24px 0 34px;
    background: #fff;
    border-top: 2px solid #ccc;
    border-left: 2px solid #ccc;
    font-size: 28px;
    color: #000;
  }
  .stats .icon {
    width: 42px;
    height: 42px;
  }
  .stat {
    display: flex;
    align-items: center;
    gap: 6px;
  }
  .stat svg {
    width: 24px;
    height: 24px;
  }
  .scale {
    box-sizing: border-box;
    width: 216px;
    height: 49px;
    margin: 25px 0 0 18px;
    padding-left: 12px;
    border: 4px solid #222;
    border-top: 0;
    background: rgba(255, 255, 255, 0.82);
    font-size: 21px;
    line-height: 44px;
    color: #333;
  }
  .beam {
    position: absolute;
    left: 0;
    top: 0;
    width: 100%;
    height: 2253px;
    fill: rgba(0, 0, 0, 0.41);
    pointer-events: none;
  }
</style>
